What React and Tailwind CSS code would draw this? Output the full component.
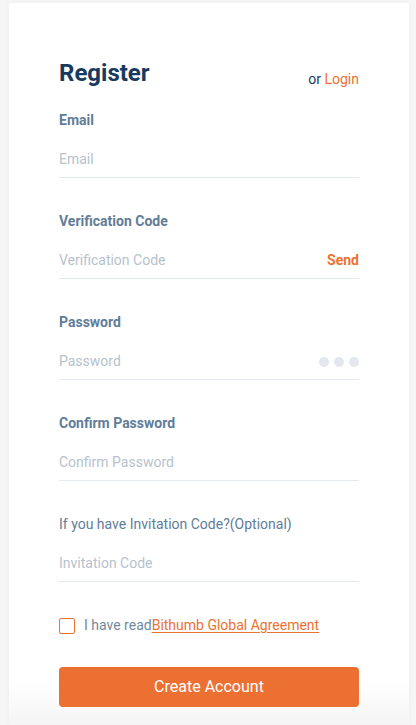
import { useState } from "react";

const font = { fontFamily: "Roboto, 'Liberation Sans', sans-serif" };

function Field({ label, placeholder, bold = true, right, type = "text" }) {
  return (
    <div className="mb-[33px]">
      <div
        className={
          bold
            ? "h-5 leading-5 text-[14px] font-bold text-[#617d98]"
            : "h-5 leading-5 text-[14px] text-[#617d98]"
        }
      >
        {label}
      </div>
      <div className="mt-[12px] flex h-9 items-center border-b border-[#e4e9ef]">
        <input
          type={type}
          placeholder={placeholder}
          className="flex-1 bg-transparent text-[14px] text-[#1b3a5c] outline-none placeholder:text-[#b7c2cd]"
          style={font}
        />
        {right}
      </div>
    </div>
  );
}

export default function App() {
  const [agreed, setAgreed] = useState(false);

  return (
    <div className="min-h-[725px] bg-[#f6f6f6] pt-[3px] pl-[9px] pr-[7px]" style={font}>
      <div className="min-h-[722px] bg-linear-to-b from-white from-[94%] to-[#f5f5f5] px-[50px] pt-[54px] shadow-[0_0_6px_rgba(0,0,0,0.04)]">
        <div className="flex items-end justify-between">
          <h1 className="text-[24px] leading-8 font-bold text-[#173a5e]">Register</h1>
          <div className="text-[14px] leading-5 text-[#1b3a5c]">
            or <span className="text-[#ec7232]">Login</span>
          </div>
        </div>

        <div className="mt-[21px]">
          <Field label="Email" placeholder="Email" />
          <Field
            label="Verification Code"
            placeholder="Verification Code"
            right={<button className="text-[14px] font-bold text-[#ec7232]">Send</button>}
          />
          <Field
            label="Password"
            placeholder="Password"
            type="password"
            right={
              <div className="flex gap-[5px]">
                <span className="h-[10px] w-[10px] rounded-full bg-[#e3e8ee]" />
                <span className="h-[10px] w-[10px] rounded-full bg-[#e3e8ee]" />
                <span className="h-[10px] w-[10px] rounded-full bg-[#e3e8ee]" />
              </div>
            }
          />
          <Field label="Confirm Password" placeholder="Confirm Password" type="password" />
          <Field
            label="If you have Invitation Code?(Optional)"
            placeholder="Invitation Code"
            bold={false}
          />
        </div>

        <label className="mt-[8px] flex items-center gap-[9px] text-[14px] text-[#7189a1]">
          <span
            onClick={() => setAgreed(!agreed)}
            className={
              agreed
                ? "h-[16px] w-[16px] rounded-[2px] border border-[#ec7232] bg-[#ec7232]"
                : "h-[16px] w-[16px] rounded-[2px] border border-[#ec7232] bg-white"
            }
          />
          <span>
            I have read
            <a className="text-[#ec7232] underline underline-offset-2">Bithumb Global Agreement</a>
          </span>
        </label>

        <button className="mt-[31px] h-10 w-full rounded-[4px] bg-[#ec7032] text-[16px] text-white">
          Create Account
        </button>
      </div>
    </div>
  );
}
